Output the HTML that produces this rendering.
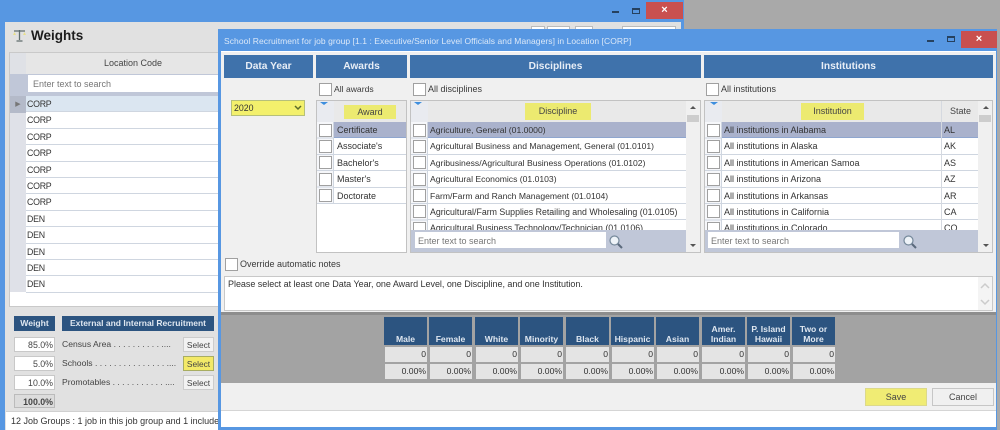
<!DOCTYPE html>
<html><head><meta charset="utf-8">
<style>
*{box-sizing:border-box}
html,body{margin:0;padding:0}
body{width:1000px;height:430px;position:relative;overflow:hidden;background:#a9a9a9;font-family:"Liberation Sans",sans-serif;font-size:9px;color:#333;filter:blur(.3px)}
div{position:absolute;white-space:nowrap}
.r{height:16.4px;line-height:16px;background:#fff;border-bottom:1px solid #cfd6e0}
.d{font-size:8.6px}
.g{font-size:8.8px;letter-spacing:-.25px;padding-left:1px;left:26px;width:194px}
.h{background:#3f72ab;color:#e8eef6;font-weight:bold;font-size:10.2px;text-align:center;height:23px;line-height:24px;top:55px}
.c{width:13px;height:13px;background:#fff;border:1px solid #a0a0a0}
.cc{background:repeating-linear-gradient(to bottom,#f6f7fa 0,#f6f7fa 15.4px,#cfd6e0 15.4px,#cfd6e0 16.4px);border-right:1px solid #cfd6e0;top:122px}
.sh{background:#ecea70;text-align:center;color:#444}
.t{color:#3a3a3a}
.s{background:#e4e4e4;text-align:right;padding-right:1px;font-size:8.6px;color:#333}
.s1{top:347px;height:15px;line-height:14px}
.s2{top:364px;height:14.500px;line-height:14px}
.m{background:#2c5480;color:#dfe7f0;font-weight:bold;font-size:8.6px;text-align:center;top:317px;height:28px;width:43px;line-height:10px;white-space:normal}
.m span{position:absolute;left:0;right:0;bottom:1px}
.lb{background:#fff;border:1px solid #c8c8c8;text-align:right;padding-right:1px;height:15px;line-height:14px;left:14px;width:41px;font-size:8.800px;color:#444}
.sel{left:183px;width:31px;height:15px;line-height:14px;background:#f2f2f2;border:1px solid #ccc;text-align:center;color:#444;font-size:8.400px}
.wl{left:62px;line-height:15px;color:#444;font-size:8.600px}
.st{left:944px;line-height:16px}
.inp{height:16px;background:#fff;line-height:19px;padding-left:3px;color:#777;top:232px;width:191px}
</style></head><body>

<!-- back window -->
<div style="left:0;top:0;width:684px;height:430px;background:#5797e2"></div>
<div style="left:5px;top:22px;width:676px;height:408px;background:#e1e1e1"></div>
<div style="left:531px;top:26px;width:14px;height:4px;background:#fff;border:1px solid #bbb"></div>
<div style="left:547px;top:26px;width:23px;height:4px;background:#fff;border:1px solid #bbb"></div>
<div style="left:575px;top:26px;width:18px;height:4px;background:#fff;border:1px solid #bbb"></div>
<div style="left:622px;top:26px;width:54px;height:4px;background:#fff;border:1px solid #bbb"></div>
<div style="left:612px;top:11px;width:7px;height:2px;background:#26415f"></div>
<div style="left:632px;top:8px;width:8px;height:6px;border:1px solid #26415f;border-top-width:2px"></div>
<div style="left:646px;top:2px;width:37px;height:17px;background:#c9504f;color:#fff;text-align:center;font-size:11px;line-height:16px;font-weight:bold">×</div>

<svg style="position:absolute;left:12px;top:28px" width="15" height="15" viewBox="0 0 15 15"><path d="M2 3h11M7.500 2v10M4.500 13h6" stroke="#5f6d6d" stroke-width="1.300" fill="none"/><path d="M1 7l1.500-3 1.500 3zM11 7l1.500-3 1.500 3z" fill="#e8df8c"/></svg>
<div style="left:31px;top:27px;font-size:13.500px;font-weight:bold;color:#1c1c1c;line-height:18px">Weights</div>

<!-- grid -->
<div style="left:9px;top:52px;width:212px;height:255px;background:#fff;border:1px solid #c9c9c9"></div>
<div style="left:10px;top:53px;width:16px;height:21px;background:#dfe1e6"></div>
<div style="left:26px;top:53px;width:194px;height:21px;background:#e6e6e6;text-align:center;line-height:20px;color:#444;padding-left:20px">Location Code</div>
<div style="left:10px;top:74px;width:210px;height:22px;background:#c0c7d8"></div>
<div style="left:28px;top:75px;width:192px;height:17px;background:#fff;line-height:19px;padding-left:5px;color:#777">Enter text to search</div>
<div style="left:10px;top:96px;width:16px;height:196px;background:#dfe1e8"></div>
<div style="left:10px;top:96px;width:16px;height:17px;background:#b4bac9;color:#777;font-size:7px;line-height:17px;text-align:center">▶</div>
<div class="r g" style="top:96px;background:#dbe6f1">CORP</div>
<div class="r g" style="top:112.400px">CORP</div>
<div class="r g" style="top:128.800px">CORP</div>
<div class="r g" style="top:145.200px">CORP</div>
<div class="r g" style="top:161.600px">CORP</div>
<div class="r g" style="top:178px">CORP</div>
<div class="r g" style="top:194.400px">CORP</div>
<div class="r g" style="top:210.800px">DEN</div>
<div class="r g" style="top:227.200px">DEN</div>
<div class="r g" style="top:243.600px">DEN</div>
<div class="r g" style="top:260px">DEN</div>
<div class="r g" style="top:276.400px">DEN</div>

<!-- weight panel -->
<div style="left:14px;top:316px;width:41px;height:15px;background:#2c5480;color:#dfe7f0;font-weight:bold;font-size:8.600px;text-align:center;line-height:15px">Weight</div>
<div style="left:62px;top:316px;width:152px;height:15px;background:#2c5480;color:#dfe7f0;font-weight:bold;font-size:8.500px;text-align:center;line-height:15px">External and Internal Recruitment</div>
<div class="lb" style="top:337px">85.0%</div>
<div class="lb" style="top:356px">5.0%</div>
<div class="lb" style="top:375px">10.0%</div>
<div class="lb" style="top:394px;height:14px;background:#dcdcdc;border-color:#bbb;font-weight:bold">100.0%</div>
<div class="wl" style="top:337px">Census Area . . . . . . . . . . ....</div>
<div class="wl" style="top:356px">Schools . . . . . . . . . . . . . . . ....</div>
<div class="wl" style="top:375px">Promotables . . . . . . . . . . . ....</div>
<div class="sel" style="top:337px">Select</div>
<div class="sel" style="top:356px;background:#f3e968;border-color:#a8ad62">Select</div>
<div class="sel" style="top:375px">Select</div>
<div style="left:6px;top:411px;width:214px;height:19px;background:#fff;padding-left:5px;line-height:18px;border-top:1px solid #d0d0d0;overflow:hidden">12 Job Groups : 1 job in this job group and 1 included</div>

<!-- front dialog -->
<div style="left:218px;top:29px;width:779px;height:401px;background:#5797e2"></div>
<div style="left:221px;top:51px;width:775px;height:376px;background:#f0f0f0;border-top:1px solid #fff"></div>
<div style="left:224px;top:36px;line-height:11px;font-size:8.500px;color:#dbe8f8;letter-spacing:.06px">School Recruitment for job group [1.1 : Executive/Senior Level Officials and Managers] in Location [CORP]</div>
<div style="left:927px;top:40px;width:7px;height:2px;background:#26415f"></div>
<div style="left:947px;top:36px;width:8px;height:6px;border:1px solid #26415f;border-top-width:2px"></div>
<div style="left:961px;top:31px;width:36px;height:17px;background:#c9504f;color:#fff;text-align:center;font-size:11px;line-height:16px;font-weight:bold">×</div>

<div class="h" style="left:224px;width:89px">Data Year</div>
<div class="h" style="left:316px;width:91px">Awards</div>
<div class="h" style="left:410px;width:291px">Disciplines</div>
<div class="h" style="left:704px;width:289px">Institutions</div>

<!-- year -->
<div style="left:231px;top:100px;width:74px;height:16px;background:#f3f06c;border:1px solid #b6c07a;line-height:14px;padding-left:2px;color:#333;font-size:8.800px">2020</div>
<svg style="position:absolute;left:294px;top:105px" width="8" height="6" viewBox="0 0 8 6"><path d="M1 1l3 3 3-3" stroke="#5b6b2a" stroke-width="1.500" fill="none"/></svg>

<!-- awards -->
<div class="c" style="left:319px;top:83px"></div><div class="t" style="left:334px;top:83px;line-height:13px;font-size:8.600px">All awards</div>
<div style="left:316px;top:100px;width:91px;height:153px;background:#fff;border:1px solid #c2c2c2"></div>
<div style="left:317px;top:101px;width:89px;height:21px;background:#e9e9e9"></div>
<div style="left:317px;top:101px;width:17px;height:21px;background:#e9ebf0"></div>
<div class="cc" style="left:317px;width:17px;height:82px"></div>
<div style="left:320px;top:102px;width:0;height:0;border-left:4px solid transparent;border-right:4px solid transparent;border-top:3px solid #3d8ede"></div>
<div class="sh" style="left:344px;top:105px;width:52px;height:14px;line-height:14px">Award</div>
<div class="r" style="left:334px;top:122px;width:72px;background:#aab2cc;padding-left:3px;border-bottom-color:#8fa6cf">Certificate</div>
<div class="r" style="left:334px;top:138.400px;width:72px;padding-left:3px">Associate's</div>
<div class="r" style="left:334px;top:154.800px;width:72px;padding-left:3px">Bachelor's</div>
<div class="r" style="left:334px;top:171.200px;width:72px;padding-left:3px">Master's</div>
<div class="r" style="left:334px;top:187.600px;width:72px;padding-left:3px">Doctorate</div>
<div class="c" style="left:319px;top:124px"></div>
<div class="c" style="left:319px;top:140px"></div>
<div class="c" style="left:319px;top:156px"></div>
<div class="c" style="left:319px;top:173px"></div>
<div class="c" style="left:319px;top:189px"></div>

<!-- disciplines -->
<div class="c" style="left:413px;top:83px"></div><div class="t" style="left:428px;top:83px;line-height:13px">All disciplines</div>
<div style="left:410px;top:100px;width:291px;height:153px;background:#fff;border:1px solid #c2c2c2;overflow:hidden"></div>
<div style="left:411px;top:101px;width:275px;height:21px;background:#e9e9e9"></div>
<div style="left:411px;top:101px;width:17px;height:21px;background:#e9ebf0"></div>
<div class="cc" style="left:411px;width:17px;height:108px"></div>
<div style="left:414px;top:102px;width:0;height:0;border-left:4px solid transparent;border-right:4px solid transparent;border-top:3px solid #3d8ede"></div>
<div class="sh" style="left:525px;top:103px;width:66px;height:17px;line-height:17px">Discipline</div>
<div class="r d" style="left:428px;top:122px;width:258px;background:#aab2cc;padding-left:2px;border-bottom-color:#8fa6cf">Agriculture, General (01.0000)</div>
<div class="r d" style="left:428px;top:138.400px;width:258px;padding-left:2px">Agricultural Business and Management, General (01.0101)</div>
<div class="r d" style="left:428px;top:154.800px;width:258px;padding-left:2px">Agribusiness/Agricultural Business Operations (01.0102)</div>
<div class="r d" style="left:428px;top:171.200px;width:258px;padding-left:2px">Agricultural Economics (01.0103)</div>
<div class="r d" style="left:428px;top:187.600px;width:258px;padding-left:2px">Farm/Farm and Ranch Management (01.0104)</div>
<div class="r d" style="left:428px;top:204px;width:258px;padding-left:2px;font-size:8.800px">Agricultural/Farm Supplies Retailing and Wholesaling (01.0105)</div>
<div class="r d" style="left:428px;top:220.400px;width:258px;padding-left:2px;font-size:8.800px">Agricultural Business Technology/Technician (01.0106)</div>
<div class="c" style="left:413px;top:124px"></div>
<div class="c" style="left:413px;top:140px"></div>
<div class="c" style="left:413px;top:156px"></div>
<div class="c" style="left:413px;top:173px"></div>
<div class="c" style="left:413px;top:189px"></div>
<div class="c" style="left:413px;top:205px"></div>
<div class="c" style="left:413px;top:222px"></div>
<div style="left:411px;top:230px;width:275px;height:22px;background:#c0c7d8"></div>
<div class="inp" style="left:415px">Enter text to search</div>
<svg style="position:absolute;left:608px;top:234px" width="16" height="16" viewBox="0 0 16 16"><circle cx="6.500" cy="6.500" r="4.500" fill="#eef3f8" stroke="#75889a" stroke-width="1.200"/><path d="M10 10l4 4" stroke="#5b6a7c" stroke-width="2"/></svg>
<div style="left:686px;top:101px;width:14px;height:151px;background:#f0f0f0"></div>
<div style="left:687px;top:115px;width:12px;height:7px;background:#cdcdcd"></div>
<div style="left:690px;top:106px;width:0;height:0;border-left:3px solid transparent;border-right:3px solid transparent;border-bottom:3px solid #555"></div>
<div style="left:690px;top:244px;width:0;height:0;border-left:3px solid transparent;border-right:3px solid transparent;border-top:3px solid #555"></div>

<!-- institutions -->
<div class="c" style="left:706px;top:83px"></div><div class="t" style="left:721px;top:83px;line-height:13px">All institutions</div>
<div style="left:704px;top:100px;width:289px;height:153px;background:#fff;border:1px solid #c2c2c2"></div>
<div style="left:705px;top:101px;width:273px;height:21px;background:#e9e9e9"></div>
<div style="left:705px;top:101px;width:17px;height:21px;background:#e9ebf0"></div>
<div class="cc" style="left:705px;width:17px;height:108px"></div>
<div style="left:710px;top:102px;width:0;height:0;border-left:4px solid transparent;border-right:4px solid transparent;border-top:3px solid #3d8ede"></div>
<div class="sh" style="left:801px;top:103px;width:63px;height:17px;line-height:17px">Institution</div>
<div style="left:950px;top:104px;line-height:15px;color:#444">State</div>
<div class="r" style="left:722px;top:122px;width:256px;background:#aab2cc;padding-left:2px;border-bottom-color:#8fa6cf">All institutions in Alabama</div>
<div class="r" style="left:722px;top:138.400px;width:256px;padding-left:2px">All institutions in Alaska</div>
<div class="r" style="left:722px;top:154.800px;width:256px;padding-left:2px">All institutions in American Samoa</div>
<div class="r" style="left:722px;top:171.200px;width:256px;padding-left:2px">All institutions in Arizona</div>
<div class="r" style="left:722px;top:187.600px;width:256px;padding-left:2px">All institutions in Arkansas</div>
<div class="r" style="left:722px;top:204px;width:256px;padding-left:2px">All institutions in California</div>
<div class="r" style="left:722px;top:220.400px;width:256px;padding-left:2px">All institutions in Colorado</div>
<div style="left:941px;top:101px;width:1px;height:129px;background:#d5d9e0"></div>
<div class="st" style="top:122px">AL</div>
<div class="st" style="top:138.400px">AK</div>
<div class="st" style="top:154.800px">AS</div>
<div class="st" style="top:171.200px">AZ</div>
<div class="st" style="top:187.600px">AR</div>
<div class="st" style="top:204px">CA</div>
<div class="st" style="top:220.400px">CO</div>
<div class="c" style="left:707px;top:124px"></div>
<div class="c" style="left:707px;top:140px"></div>
<div class="c" style="left:707px;top:156px"></div>
<div class="c" style="left:707px;top:173px"></div>
<div class="c" style="left:707px;top:189px"></div>
<div class="c" style="left:707px;top:205px"></div>
<div class="c" style="left:707px;top:222px"></div>
<div style="left:705px;top:230px;width:273px;height:22px;background:#c0c7d8"></div>
<div class="inp" style="left:708px">Enter text to search</div>
<svg style="position:absolute;left:902px;top:234px" width="16" height="16" viewBox="0 0 16 16"><circle cx="6.500" cy="6.500" r="4.500" fill="#eef3f8" stroke="#75889a" stroke-width="1.200"/><path d="M10 10l4 4" stroke="#5b6a7c" stroke-width="2"/></svg>
<div style="left:978px;top:101px;width:14px;height:151px;background:#f0f0f0"></div>
<div style="left:979px;top:115px;width:12px;height:7px;background:#cdcdcd"></div>
<div style="left:983px;top:106px;width:0;height:0;border-left:3px solid transparent;border-right:3px solid transparent;border-bottom:3px solid #555"></div>
<div style="left:983px;top:244px;width:0;height:0;border-left:3px solid transparent;border-right:3px solid transparent;border-top:3px solid #555"></div>

<!-- notes -->
<div class="c" style="left:225px;top:258px"></div><div class="t" style="left:240px;top:258px;line-height:13px">Override automatic notes</div>
<div style="left:224px;top:276px;width:769px;height:35px;background:#fff;border:1px solid #c8c8c8;padding:1px 3px;line-height:12px;color:#333;letter-spacing:-.03px">Please select at least one Data Year, one Award Level, one Discipline, and one Institution.</div>
<div style="left:978px;top:277px;width:14px;height:33px;background:#f4f4f4"></div>
<svg style="position:absolute;left:980px;top:282px" width="10" height="24" viewBox="0 0 10 24"><path d="M1 6l4-4 4 4M1 18l4 4 4-4" stroke="#ccc" stroke-width="1.500" fill="none"/></svg>

<!-- metrics -->
<div style="left:221px;top:312px;width:775px;height:71px;background:#a3a3a3;border-top:3px solid #8d8d8d"></div>
<div class="m" style="left:384px"><span>Male</span></div>
<div class="m" style="left:429px"><span>Female</span></div>
<div class="m" style="left:475px"><span>White</span></div>
<div class="m" style="left:520px"><span>Minority</span></div>
<div class="m" style="left:566px"><span>Black</span></div>
<div class="m" style="left:611px"><span>Hispanic</span></div>
<div class="m" style="left:656px"><span>Asian</span></div>
<div class="m" style="left:702px"><span>Amer.<br>Indian</span></div>
<div class="m" style="left:747px"><span>P. Island<br>Hawaii</span></div>
<div class="m" style="left:792px"><span>Two or<br>More</span></div>

<div class="s s1" style="left:385px;width:42px">0</div>
<div class="s s1" style="left:430px;width:42px">0</div>
<div class="s s1" style="left:476px;width:42px">0</div>
<div class="s s1" style="left:521px;width:42px">0</div>
<div class="s s1" style="left:566px;width:43px">0</div>
<div class="s s1" style="left:612px;width:42px">0</div>
<div class="s s1" style="left:657px;width:42px">0</div>
<div class="s s1" style="left:702px;width:43px">0</div>
<div class="s s1" style="left:748px;width:42px">0</div>
<div class="s s1" style="left:793px;width:42px">0</div>
<div class="s s2" style="left:385px;width:42px">0.00%</div>
<div class="s s2" style="left:430px;width:42px">0.00%</div>
<div class="s s2" style="left:476px;width:42px">0.00%</div>
<div class="s s2" style="left:521px;width:42px">0.00%</div>
<div class="s s2" style="left:566px;width:43px">0.00%</div>
<div class="s s2" style="left:612px;width:42px">0.00%</div>
<div class="s s2" style="left:657px;width:42px">0.00%</div>
<div class="s s2" style="left:702px;width:43px">0.00%</div>
<div class="s s2" style="left:748px;width:42px">0.00%</div>
<div class="s s2" style="left:793px;width:42px">0.00%</div>

<!-- footer -->
<div style="left:865px;top:388px;width:62px;height:18px;background:#f0ec74;border:1px solid #dcd98a;text-align:center;line-height:16px;color:#444">Save</div>
<div style="left:932px;top:388px;width:62px;height:18px;background:#f0f0f0;border:1px solid #c6c6c6;text-align:center;line-height:16px;color:#444">Cancel</div>
<div style="left:221px;top:410px;width:775px;height:17px;background:#fff;border-top:1px solid #d5d5d5"></div>
</body></html>
